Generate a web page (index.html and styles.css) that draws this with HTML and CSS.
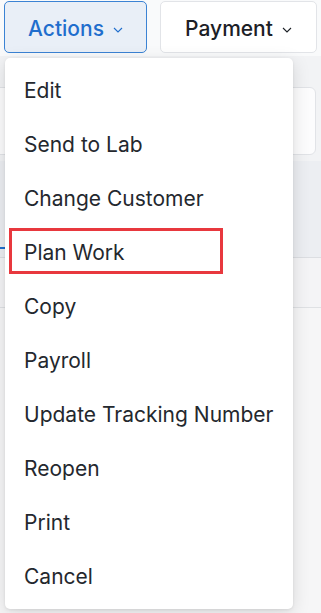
FILE: index.html
```html
<!DOCTYPE html>
<html lang="en">

<head>
    <meta charset="UTF-8">
    <meta name="viewport" content="width=device-width, initial-scale=1.0">
    <title>Job Actions</title>
    <link rel="stylesheet" href="styles.css">
</head>

<body>
    <div class="toolbar">
        <button class="btn btn-actions">Actions
            <svg class="caret" viewBox="0 0 10 6" width="10" height="6"><path d="M1 1l4 4 4-4" /></svg>
        </button>
        <button class="btn btn-payment">Payment
            <svg class="caret" viewBox="0 0 10 6" width="10" height="6"><path d="M1 1l4 4 4-4" /></svg>
        </button>
    </div>

    <div class="page">
        <div class="summary-card"></div>
        <div class="tabs">
            <div class="tab-active"></div>
        </div>
        <div class="row"></div>
        <div class="row row-light"></div>
    </div>

    <ul class="menu">
        <li>Edit</li>
        <li>Send to Lab</li>
        <li>Change Customer</li>
        <li class="marked">Plan Work<span class="mark-box"></span></li>
        <li>Copy</li>
        <li>Payroll</li>
        <li>Update Tracking Number</li>
        <li>Reopen</li>
        <li>Print</li>
        <li>Cancel</li>
    </ul>
</body>

</html>
```

FILE: styles.css
```css
body {
    margin: 0;
    background-color: #f2f3f5;
    font-family: 'Inter', 'Liberation Sans', sans-serif;
    color: #24282e;
    width: 321px;
    height: 613px;
    overflow: hidden;
    position: relative;
}

/* top bar with the two dropdown buttons */
.toolbar {
    display: flex;
    gap: 13px;
    padding: 1px 4px 0 4px;
    height: 56px;
    box-sizing: border-box;
    background-color: #f9fafb;
}

.btn {
    height: 52px;
    border-radius: 5px;
    font-family: inherit;
    font-size: 21px;
    font-weight: 500;
    display: flex;
    align-items: center;
    justify-content: center;
    gap: 9px;
    padding: 0;
    padding-top: 2px;
    cursor: pointer;
}

.btn-actions {
    width: 143px;
    background-color: #e9eff7;
    border: 1px solid #3b83d4;
    color: #1f6ecd;
}

.btn-payment {
    width: 157px;
    background-color: #ffffff;
    border: 1px solid #e2e4e8;
    color: #1c2026;
}

.caret {
    fill: none;
    stroke: currentColor;
    stroke-width: 1.1;
    margin-top: 3px;
}

/* the page that sits behind the open menu */
.page {
    padding-top: 31px;
}

.summary-card {
    height: 66px;
    margin: 0 5px 0 -6px;
    background-color: #fcfcfd;
    border: 1px solid #e1e3e7;
    border-radius: 6px;
}

.tabs {
    height: 96px;
    margin-top: 6px;
    background-color: #eceef2;
    border-bottom: 1px solid #dcdee2;
    position: relative;
}

.tab-active {
    position: absolute;
    left: 0;
    top: 86px;
    width: 6px;
    height: 2px;
    background-color: #1f6ecd;
}

.row {
    height: 49px;
    background-color: #f4f4f6;
    border-bottom: 1px solid #dfe1e4;
}

.row-light {
    height: 320px;
    background-color: #f6f6f7;
    border-bottom: none;
}

/* open dropdown */
.menu {
    position: absolute;
    top: 58px;
    left: 5px;
    width: 288px;
    margin: 0;
    padding: 5px 0 6px 0;
    list-style: none;
    background-color: #ffffff;
    border-radius: 5px;
    box-shadow: 0 4px 18px rgba(0, 0, 0, 0.13), 0 1px 3px rgba(0, 0, 0, 0.08);
}

.menu li {
    height: 54px;
    line-height: 55px;
    padding-left: 19px;
    font-size: 21px;
    position: relative;
}

.mark-box {
    position: absolute;
    left: 4px;
    top: 3px;
    width: 208px;
    height: 40px;
    border: 3px solid #e8383e;
}
```
